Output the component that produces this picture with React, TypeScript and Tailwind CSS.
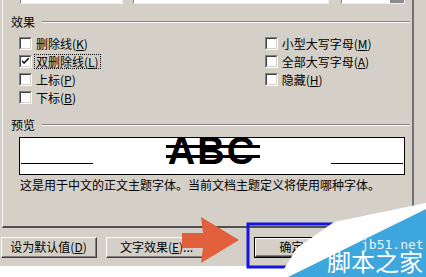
import React from "react";

const FONT = { fontFamily: '"Noto Sans CJK SC", "Liberation Sans", sans-serif' };

function Check({ checked }: { checked?: boolean }) {
  return (
    <div className="w-[13px] h-[13px] border-t border-l border-t-[#808080] border-l-[#808080] border-b border-r border-b-white border-r-white shrink-0">
      <div className="w-full h-full border-t border-l border-t-[#404040] border-l-[#404040] border-b border-r border-b-[#d4d0c8] border-r-[#d4d0c8] bg-white flex items-center justify-center">
        {checked && (
          <svg width="7" height="7" viewBox="0 0 7 7">
            <path d="M0 2 L0 4 L2 6 L7 1 L7 -1 L2 4 Z" fill="#000" />
          </svg>
        )}
      </div>
    </div>
  );
}

function Mn({ label, k }: { label: string; k: string }) {
  return (
    <span className="whitespace-nowrap">
      {label}(<u>{k}</u>)
    </span>
  );
}

function Row({ label, k, checked, focus }: { label: string; k: string; checked?: boolean; focus?: boolean }) {
  return (
    <div className="h-[18px] flex items-center gap-[3px]">
      <Check checked={checked} />
      <div className={focus ? "outline outline-1 outline-dotted outline-black px-[1px] leading-[13px]" : "px-[1px] leading-[13px]"}>
        <Mn label={label} k={k} />
      </div>
    </div>
  );
}

function GroupHeader({ text }: { text: string }) {
  return (
    <div className="flex items-center h-[12px] pl-[8px] pr-[2px]">
      <span className="text-[12px] leading-[12px]">{text}</span>
      <div className="flex-1 ml-[7px] h-[2px] border-t border-t-[#808080] border-b border-b-white" />
    </div>
  );
}

function Btn({ children, w, def }: { children: React.ReactNode; w: string; def?: boolean }) {
  const inner = (
    <div className="h-full border-t border-l border-t-white border-l-white border-b border-r border-b-[#404040] border-r-[#404040]">
      <div className="h-full border-b border-r border-b-[#808080] border-r-[#808080] flex items-center justify-center text-[12px] leading-[12px]">
        {children}
      </div>
    </div>
  );
  return def ? (
    <div className={`${w} h-[21px] border border-black`}>{inner}</div>
  ) : (
    <div className={`${w} h-[21px]`}>{inner}</div>
  );
}

export default function App() {
  return (
    <div className="w-[426px] h-[277px] relative overflow-hidden bg-white text-black" style={FONT}>
      <div className="h-[266px] bg-[#d4d0c8] flex flex-col">
        {/* tab page */}
        <div className="ml-[2px] w-[412px] h-[228px] border-l border-l-[#f4f4f4] border-r-2 border-r-[#707070] border-b-2 border-b-[#505050] flex flex-col">
          {/* top inputs (cut off) */}
          <div className="flex h-[4px] items-end">
            <div className="ml-[17px] w-[103px] h-[4px] bg-white border-b border-r border-b-[#f0f0f0] border-r-[#f0f0f0] border-l border-l-[#808080]" />
            <div className="ml-[10px] w-[196px] h-[4px] bg-white border-b border-r border-b-[#f0f0f0] border-r-[#f0f0f0] border-l border-l-[#808080]" />
            <div className="ml-[12px] w-[64px] h-[4px] bg-white border-b border-r border-b-[#f0f0f0] border-r-[#f0f0f0] border-l border-l-[#808080] flex justify-end">
              <div className="w-[14px] h-[3px] bg-[#8a8a8a]" />
            </div>
          </div>
          <div className="mt-[12px]">
            <GroupHeader text="效果" />
          </div>
          <div className="mt-[6px] flex text-[12px]">
            <div className="ml-[16px] flex flex-col">
              <Row label="删除线" k="K" />
              <Row label="双删除线" k="L" checked focus />
              <Row label="上标" k="P" />
              <Row label="下标" k="B" />
            </div>
            <div className="ml-[165px] flex flex-col">
              <Row label="小型大写字母" k="M" />
              <Row label="全部大写字母" k="A" />
              <Row label="隐藏" k="H" />
            </div>
          </div>
          <div className="mt-[13px]">
            <GroupHeader text="预览" />
          </div>
          <div className="mt-[6px] ml-[16px] w-[386px] h-[38px] border border-black bg-white relative overflow-hidden flex justify-between">
            <div className="mt-[25px] ml-[1px] w-[72px] h-px bg-black" />
            <div className="relative mt-[-6px] h-[40px]">
              <span className="text-[38px] leading-[38px] font-bold tracking-[2px]" style={{ fontFamily: '"Liberation Sans", Arial, sans-serif' }}>
                ABC
              </span>
              <div className="absolute left-[-2px] right-[-4px] top-[13px] h-[3px] bg-black" />
              <div className="absolute left-[-2px] right-[-4px] top-[23px] h-[3px] bg-black" />
            </div>
            <div className="mt-[25px] mr-[1px] w-[72px] h-px bg-black" />
          </div>
          <div className="mt-[3px] ml-[17px] text-[12px] leading-[13px]">
            这是用于中文的正文主题字体。当前文档主题定义将使用哪种字体。
          </div>
        </div>
        {/* buttons */}
        <div className="mt-[9px] flex">
          <div className="ml-[1px]">
            <Btn w="w-[96px]">
              <Mn label="设为默认值" k="D" />
            </Btn>
          </div>
          <div className="ml-[9px]">
            <Btn w="w-[102px]">
              <span>
                文字效果(<u>E</u>)...
              </span>
            </Btn>
          </div>
          <div className="ml-[46px]">
            <Btn w="w-[76px]" def>
              <span>确定</span>
            </Btn>
          </div>
        </div>
      </div>

      {/* annotation overlays */}
      <svg className="absolute left-0 top-0" width="426" height="277" viewBox="0 0 426 277">
        <polygon points="182,233 203,233 201,217 239,240 201,263 203,248 182,248" fill="#e2603b" />
        <rect x="248" y="224" width="86" height="43" fill="none" stroke="#1414e6" strokeWidth="3" />
        <polygon points="279,277 297,248 334,222 426,203 426,277" fill="#ffffff" />
        <polygon points="288,277 426,209 426,277" fill="#3da6dc" />
      </svg>
      <div className="absolute left-[361px] top-[238px] text-[13px] leading-[13px] text-[#e8f4fb]" style={{ fontFamily: '"DejaVu Sans Mono", monospace' }}>
        jb51.net
      </div>
      <div className="absolute left-[327px] top-[249px] text-[24px] leading-[24px] text-white" style={FONT}>
        脚本之家
      </div>
    </div>
  );
}
